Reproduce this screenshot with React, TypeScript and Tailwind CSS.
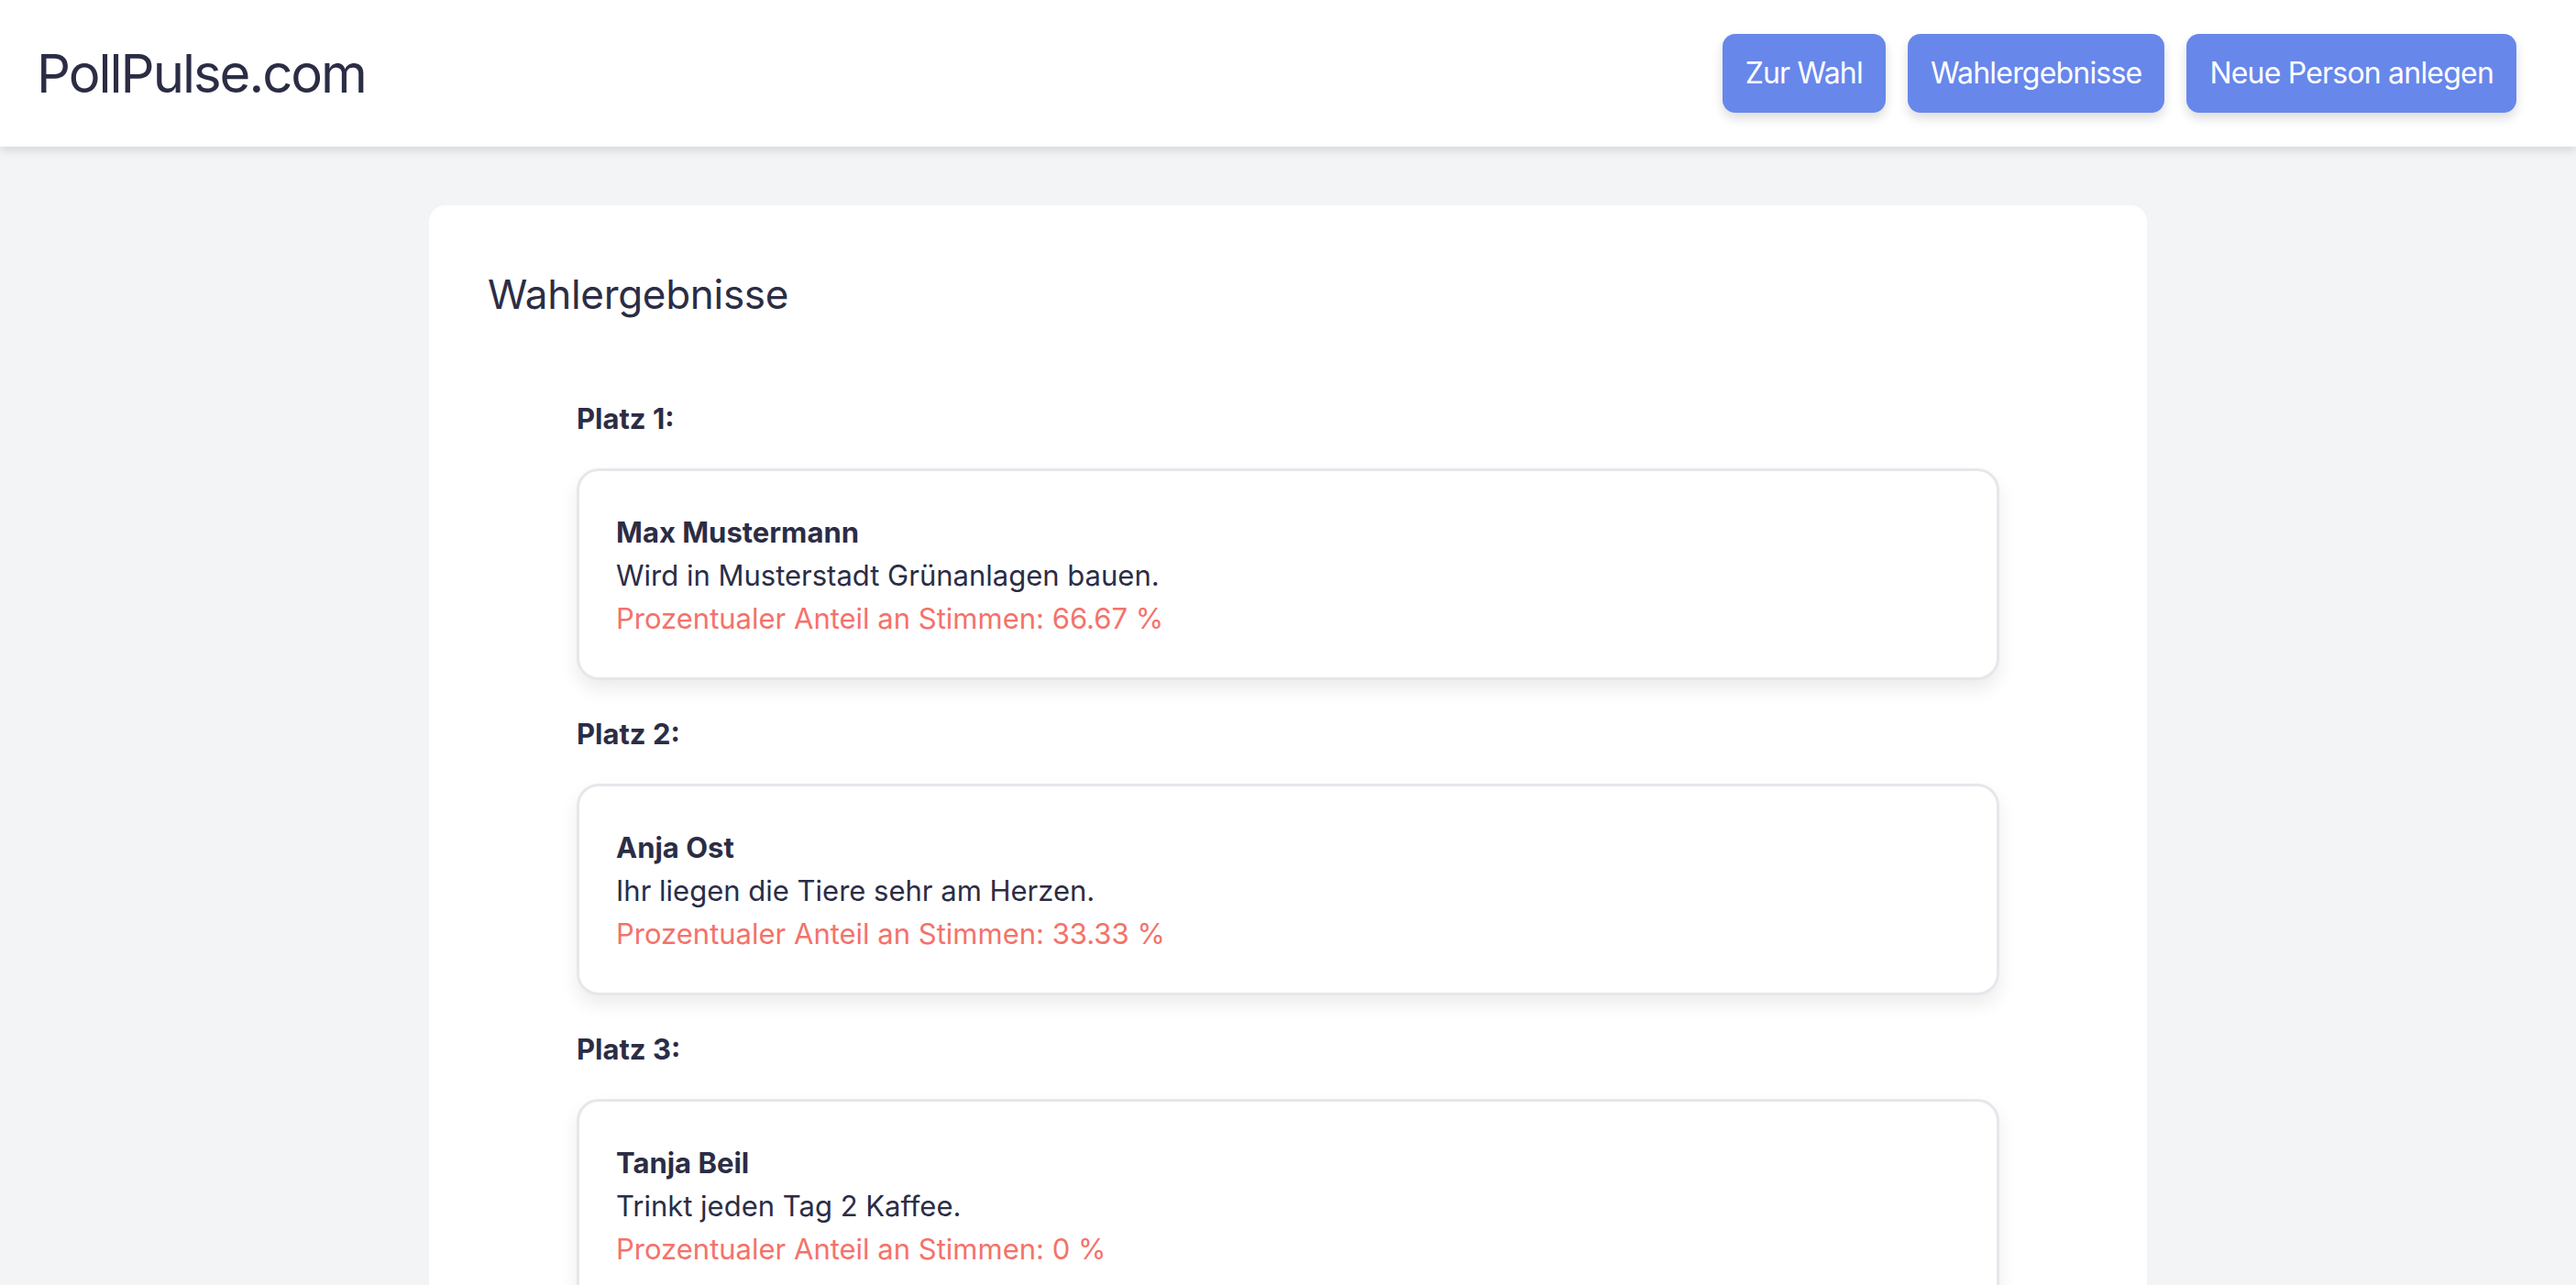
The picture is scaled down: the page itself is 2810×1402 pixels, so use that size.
import React from 'react';

interface Candidate {
  name: string;
  description: string;
  share: string;
}

const RESULTS: Candidate[] = [
  { name: 'Max Mustermann', description: 'Wird in Musterstadt Grünanlagen bauen.', share: '66.67' },
  { name: 'Anja Ost', description: 'Ihr liegen die Tiere sehr am Herzen.', share: '33.33' },
  { name: 'Tanja Beil', description: 'Trinkt jeden Tag 2 Kaffee.', share: '0' }
];

const NAV_ITEMS = ['Zur Wahl', 'Wahlergebnisse', 'Neue Person anlegen'];

function Header() {
  return (
    <header className="relative z-10 h-[160px] bg-white shadow-[0_4px_10px_rgba(0,0,0,0.12)] flex items-center justify-between pl-[40px] pr-[65px]">
      <h1 className="text-[58px] leading-none text-[#2b2d45] tracking-[-2px]">PollPulse.com</h1>
      <nav className="flex items-center gap-[24px]">
        {NAV_ITEMS.map(item => (
          <button
            key={item}
            className="h-[86px] px-[25px] rounded-[14px] bg-[#6787ea] text-white text-[32px] tracking-[-0.8px] shadow-[0_6px_12px_rgba(0,0,0,0.14)]"
          >
            {item}
          </button>
        ))}
      </nav>
    </header>
  );
}

function ResultCard({ candidate }: { candidate: Candidate }) {
  return (
    <div className="border-[3px] border-[#e5e7eb] rounded-[24px] bg-white pt-[43px] pb-[41px] px-[40px] shadow-[0_10px_20px_rgba(0,0,0,0.08)] text-[31px] leading-[47px]">
      <div className="font-bold text-[#2b2d45]">{candidate.name}</div>
      <div className="text-[#2b2d45]">{candidate.description}</div>
      <div className="text-[#f4726a]">Prozentualer Anteil an Stimmen: {candidate.share} %</div>
    </div>
  );
}

export default function App() {
  return (
    <div className="min-h-screen bg-[#f3f4f6] font-['Inter',sans-serif]">
      <Header />
      <main className="pt-[64px]">
        <div className="mx-auto w-[1874px] bg-white rounded-[18px] px-[64px] pt-[64px] pb-[80px]">
          <h2 className="text-[44px] leading-[66px] text-[#2b2d45] tracking-[-0.3px]">Wahlergebnisse</h2>
          <div className="mx-[97px] mt-[44px] flex flex-col">
            {RESULTS.map((candidate, i) => (
              <div key={candidate.name} className="flex flex-col">
                <div className="mt-[36px] mb-[32px] text-[31px] leading-[45px] font-bold text-[#2b2d45]">
                  Platz {i + 1}:
                </div>
                <ResultCard candidate={candidate} />
              </div>
            ))}
          </div>
        </div>
      </main>
    </div>
  );
}
